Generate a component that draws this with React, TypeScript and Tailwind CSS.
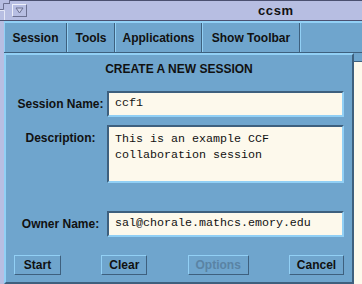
import React from "react";

const DARK = "#3e607e";

function MenuItem({ label, w }: { label: string; w: string }) {
  return (
    <div
      className={`${w} h-full flex items-center justify-center border-l border-r border-l-[#92d0f5] border-r-[#3e607e] text-[12px] font-bold text-[#111]`}
    >
      {label}
    </div>
  );
}

function Btn({ label, w, disabled }: { label: string; w: string; disabled?: boolean }) {
  return (
    <div
      className={`${w} h-[20px] flex items-center justify-center border border-t-[#92d0f5] border-l-[#92d0f5] border-b-[#3e607e] border-r-[#3e607e] text-[12px] font-bold ${
        disabled ? "text-[#5a83a4]" : "text-[#111]"
      }`}
    >
      {label}
    </div>
  );
}

export default function App() {
  return (
    <div
      className="w-[362px] h-[284px] bg-[#b7bee2] flex flex-col overflow-hidden"
      style={{ fontFamily: '"Liberation Sans", Arial, sans-serif' }}
    >
      {/* title bar */}
      <div className="h-[20px] flex">
        <svg width="10" height="20" viewBox="0 0 10 20" className="shrink-0">
          <path d="M0 9.5 H3.5 V3.5 H10" stroke="#6b7090" strokeWidth="1" fill="none" />
          <path d="M9.5 0 V4" stroke="#6b7090" strokeWidth="1" fill="none" />
          <path d="M0 10.5 H4.5 V20" stroke="#e4e7f6" strokeWidth="1" fill="none" />
        </svg>
        <div className="flex-1 border-t border-t-[#4b5070] flex items-start">
          <div className="mt-[3px] ml-[2px] w-[15px] h-[13px] border border-t-[#eef0fa] border-l-[#eef0fa] border-b-[#6b7090] border-r-[#6b7090] flex items-center justify-center">
            <svg width="9" height="7" viewBox="0 0 9 7">
              <path d="M1 1 H8 L4.5 6 Z" fill="#c9cde8" stroke="#6b7090" strokeWidth="1" />
            </svg>
          </div>
          <div className="ml-[231px] mt-[1px] text-[13px] font-bold tracking-[0.6px] text-[#111] leading-[17px]">
            ccsm
          </div>
        </div>
      </div>
      <div className="h-px bg-[#4b5070]" />
      {/* body */}
      <div className="flex-1 flex">
        <div className="w-[4px] shrink-0" />
        <div className="flex-1 flex flex-col">
          {/* menu bar */}
          <div className="h-[32px] bg-[#6fa5cd] border-t-2 border-t-[#92d0f5] border-b border-b-[#3e607e] flex">
            <MenuItem label="Session" w="w-[63px]" />
            <MenuItem label="Tools" w="w-[48px]" />
            <MenuItem label="Applications" w="w-[87px]" />
            <MenuItem label="Show Toolbar" w="w-[98px]" />
            <div className="flex-1 h-full border-l border-l-[#92d0f5]" />
          </div>
          {/* panel row */}
          <div className="flex-1 flex">
            <div className="w-[350px] shrink-0 bg-[#6fa5cd] border-t-2 border-l-2 border-t-[#92d0f5] border-l-[#92d0f5] border-r-2 border-b-2 border-r-[#3e607e] border-b-[#3e607e] px-[8px] pt-[7px] flex flex-col">
              <div className="text-center text-[12px] font-bold leading-[15px] text-[#111]">
                CREATE A NEW SESSION
              </div>
              {/* session name */}
              <div className="mt-[14px] flex items-center">
                <div className="w-[93px] text-center text-[12px] font-bold text-[#111] leading-[15px]">
                  Session Name:
                </div>
                <div
                  className="w-[237px] h-[26px] bg-[#fdf9ec] border-2 border-t-[#3e607e] border-l-[#3e607e] border-b-[#92d0f5] border-r-[#92d0f5] pl-[6px] flex items-center text-[11.67px] text-[#111]"
                  style={{ fontFamily: '"Liberation Mono", "Courier New", monospace' }}
                >
                  ccf1
                </div>
              </div>
              {/* description */}
              <div className="mt-[8px] flex items-start">
                <div className="w-[93px] pt-[6px] text-center text-[12px] font-bold text-[#111] leading-[15px]">
                  Description:
                </div>
                <div
                  className="w-[237px] h-[58px] bg-[#fdf9ec] border-2 border-t-[#3e607e] border-l-[#3e607e] border-b-[#92d0f5] border-r-[#92d0f5] pl-[6px] pt-[4px] text-[11.67px] leading-[16px] text-[#111]"
                  style={{ fontFamily: '"Liberation Mono", "Courier New", monospace' }}
                >
                  This is an example CCF
                  <br />
                  collaboration session
                </div>
              </div>
              {/* owner */}
              <div className="mt-[28px] flex items-center">
                <div className="w-[93px] text-center text-[12px] font-bold text-[#111] leading-[15px]">
                  Owner Name:
                </div>
                <div
                  className="w-[237px] h-[26px] bg-[#fdf9ec] border-2 border-t-[#3e607e] border-l-[#3e607e] border-b-[#92d0f5] border-r-[#92d0f5] pl-[6px] flex items-center text-[11.67px] text-[#111]"
                  style={{ fontFamily: '"Liberation Mono", "Courier New", monospace' }}
                >
                  sal@chorale.mathcs.emory.edu
                </div>
              </div>
              {/* buttons */}
              <div className="mt-[18px] flex justify-between">
                <Btn label="Start" w="w-[47px]" />
                <Btn label="Clear" w="w-[46px]" />
                <Btn label="Options" w="w-[61px]" disabled />
                <Btn label="Cancel" w="w-[55px]" />
              </div>
            </div>
            <div className="flex-1 flex flex-col">
              <div className="h-[8px] bg-[#6fa5cd]" />
              <div className="h-px" style={{ background: DARK }} />
              <div className="flex-1 bg-[#fdf9ec]" />
            </div>
          </div>
        </div>
      </div>
    </div>
  );
}
